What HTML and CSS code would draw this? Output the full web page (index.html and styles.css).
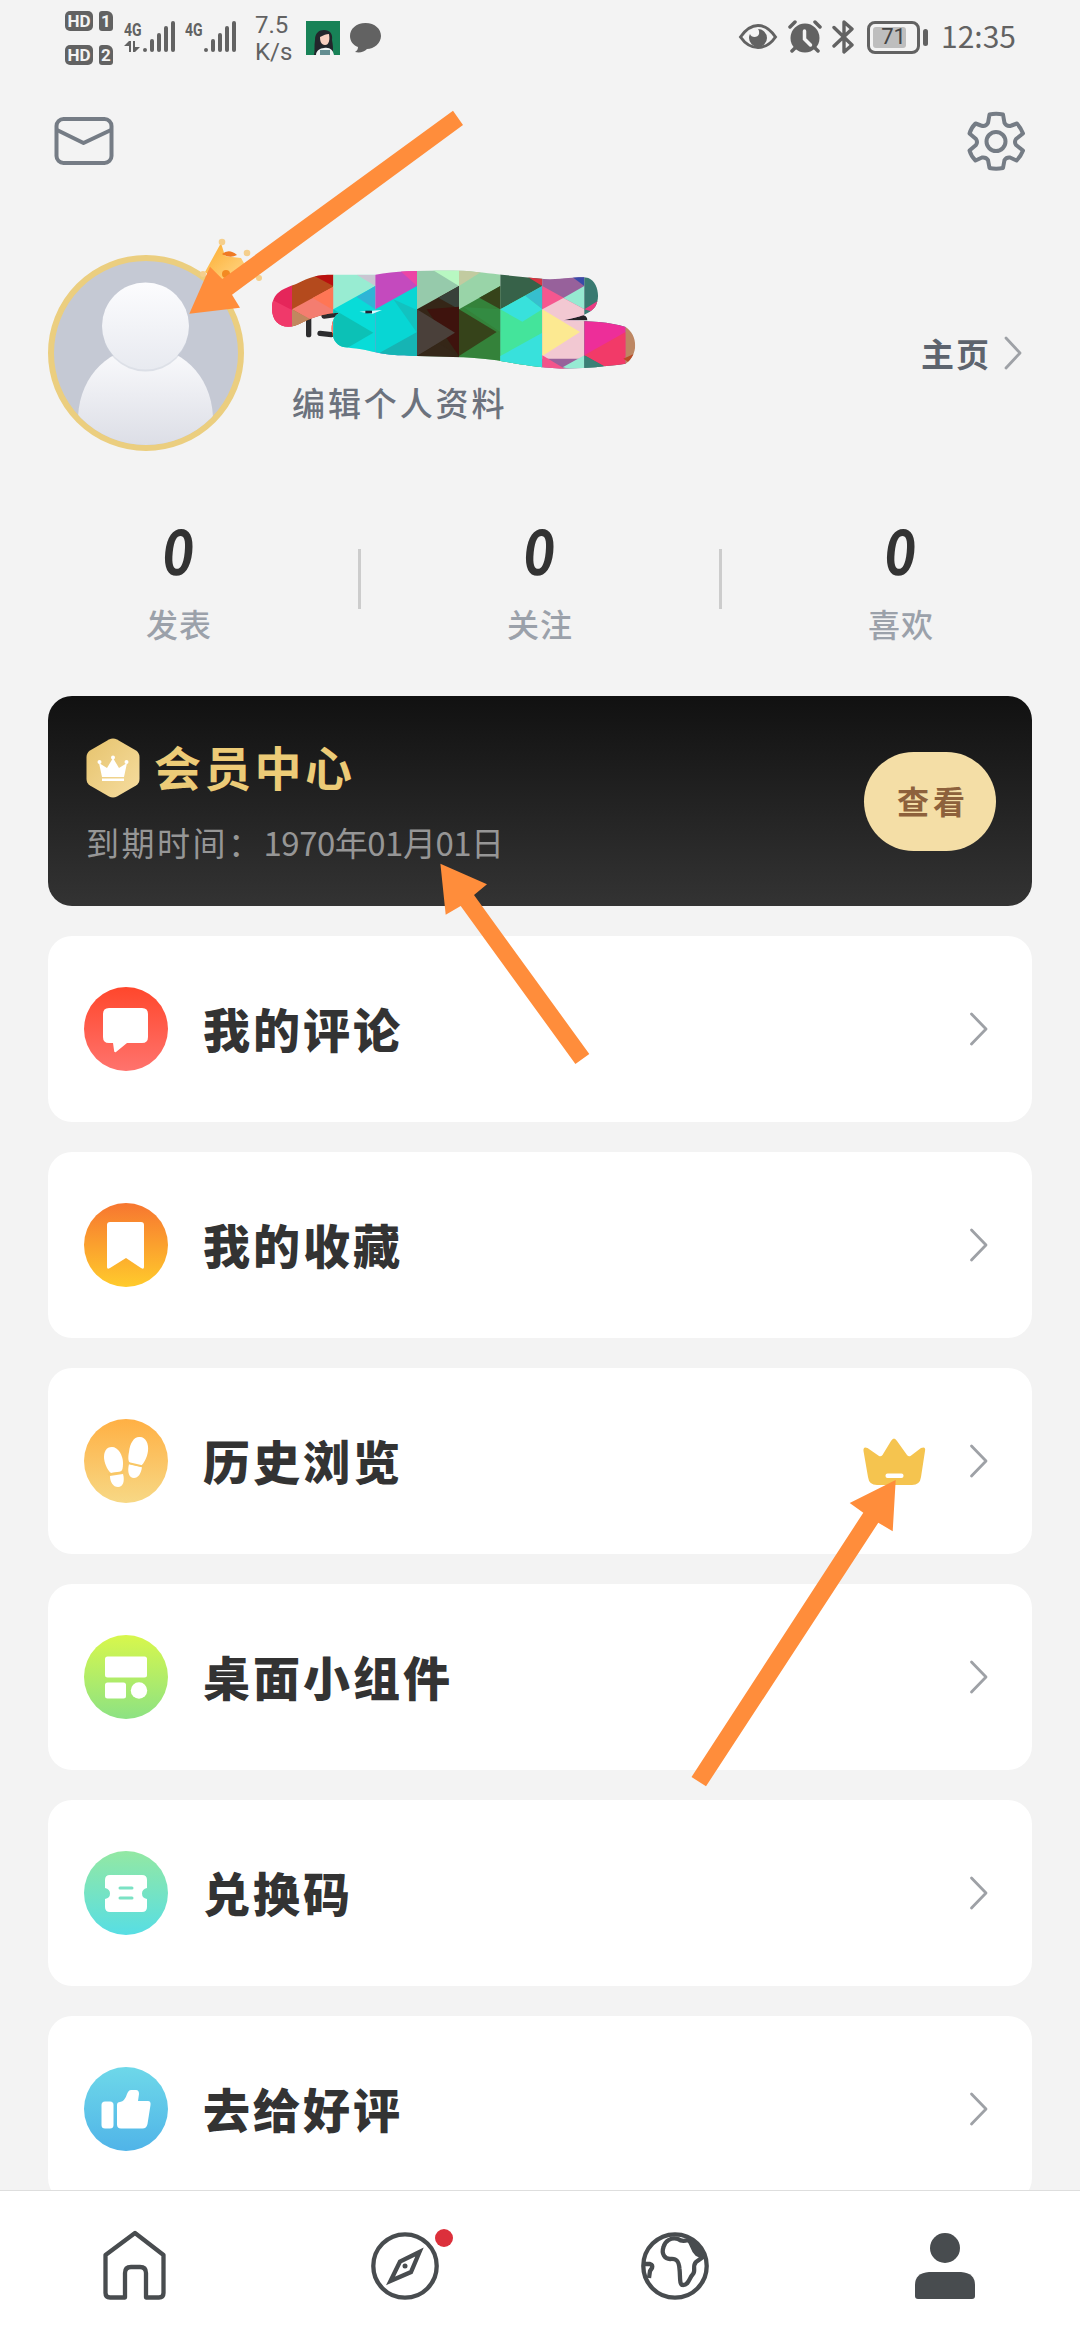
FILE: index.html
```html
<!DOCTYPE html>
<html lang="zh-CN">
<head>
<meta charset="utf-8">
<title>我的</title>
<link rel="stylesheet" href="styles.css">
</head>
<body>
<div class="screen">
  <header class="status">
    <div class="status-left">
      <div class="hd-stack">
        <div class="hd-row"><span class="hd">HD</span><span class="sim">1</span></div>
        <div class="hd-row"><span class="hd">HD</span><span class="sim">2</span></div>
      </div>
      <div class="signal signal-data">
        <span class="net">4G</span>
        <svg width="52" height="34" viewBox="0 0 52 34"><g stroke="#626262" stroke-width="4" stroke-linecap="round"><path d="M21 30v.1M28 21v9M35 15v15M42 8v22M49 3v27"/></g><path d="M0 26l5-5h2v11H5v-6zM9 21h2v6h5l-5 5H9z" fill="#626262"/></svg>
      </div>
      <div class="signal">
        <span class="net">4G</span>
        <svg width="52" height="34" viewBox="0 0 52 34"><g stroke="#626262" stroke-width="4" stroke-linecap="round"><path d="M21 30v.1M28 21v9M35 15v15M42 8v22M49 3v27"/></g></svg>
      </div>
      <div class="speed"><span>7.5</span><span>K/s</span></div>
      <svg class="app-thumb" width="34" height="34" viewBox="0 0 34 34"><path fill="#188257" d="M0 0h34v34H0z"/><path d="M8 34c1-5 0-9 1-15 0-7 4-10 9-10 6 0 9 4 8 10 1 5 1 8 1 12l-4 3z" fill="#23252b"/><path d="M14 16c4-2 6-3 9-3 1 6 0 11-4 11s-5-4-5-8z" fill="#f8cfc0"/><path d="M10 34c0-4 4-7 8-7 6-1 9 2 10 7z" fill="#eef2f2"/><path d="M14 34v-5h10v5z" fill="#638d91"/></svg>
      <svg class="bubble" width="33" height="32" viewBox="0 0 33 32"><path d="M16.500 1C26 1 32 7 32 14S25 27 18 27c-3 3-7 4-12 3 2-1 3-3 3-5C4 23 1 19 1 14 1 7 7 1 16.500 1z" fill="#626262"/></svg>
    </div>
    <div class="status-right">
      <svg width="40" height="28" viewBox="0 0 40 28"><path d="M2.500 14C8 6 13 2.500 20 2.500S32 6 37.500 14C32 22 27 24.500 20 24.500S8 22 2.500 14z" fill="none" stroke="#626262" stroke-width="3"/><path d="M20 6a9 9 0 1 1-9 9c0-2 .5-3 1-4 1 4 8 4 9 0 .3-2 0-4-1-5z" fill="#626262"/></svg>
      <svg width="34" height="34" viewBox="0 0 34 34"><circle cx="17" cy="18" r="14.500" fill="#626262"/><path d="M2 7l5-5M27 2l5 5M7 28l-3 3M27 28l3 3" stroke="#626262" stroke-width="3.500" stroke-linecap="round"/><path d="M16.500 11v8l6 6" fill="none" stroke="#f3f3f3" stroke-width="3.500" stroke-linecap="round"/></svg>
      <svg width="24" height="36" viewBox="0 0 24 36"><path d="M2 8.500l18 17.500-8 7V3l8 7L2 27" fill="none" stroke="#626262" stroke-width="3.400" stroke-linecap="round" stroke-linejoin="round"/></svg>
      <div class="battery"><span class="battery-fill"></span><span class="battery-num">71</span></div>
      <span class="battery-cap"></span>
      <span class="clock">12:35</span>
    </div>
  </header>

  <div class="toolbar">
    <svg width="60" height="50" viewBox="0 0 60 50"><g fill="none" stroke="#757c85" stroke-width="4"><rect x="2.500" y="3" width="55" height="44" rx="7"/><path d="M3 14l26.500 13L57 14" stroke-linejoin="round"/></g></svg>
    <svg width="60" height="60" viewBox="0 0 60 60"><g fill="none" stroke="#757c85" stroke-width="4" stroke-linejoin="round"><path d="M23.500 3.500Q30 2 37 3.500L38.500 12Q41 16 45.500 14.500L51 12.500Q55 17 57 22.500L50 28Q48 31 50 34L57 39.500Q55 45 50.500 49.500L44 46.500Q40.500 46 38.500 49L37 57Q30 58.500 23.500 57L22 49Q20 46 16 46.500L9.500 49.500Q5 45 3.500 39.500L10 34Q12 31 10 28L3.500 22.500Q5 17 9.500 12.500L15 14.500Q19.500 16 22 12Z"/><circle cx="30" cy="30.500" r="9.500"/></g></svg>
  </div>

  <section class="profile">
    <div class="avatar">
      <svg width="184" height="184" viewBox="0 0 184 184">
        <defs>
          <linearGradient id="person" x1="0" y1="0" x2="0" y2="1"><stop offset="0" stop-color="#fcfcfe"/><stop offset="1" stop-color="#e8eaf0"/></linearGradient>
          <linearGradient id="torso" x1="0" y1="0" x2="0" y2="1"><stop offset="0" stop-color="#fbfbfd"/><stop offset="1" stop-color="#dcdee6"/></linearGradient>
        </defs>
        <path d="M24 184V156C26 112 58 86 91.500 86S157 112 159 156V184z" fill="url(#torso)"/>
        <circle cx="91.500" cy="67" r="43.500" fill="#c9cdd8" opacity=".55"/>
        <circle cx="91.500" cy="65" r="43.500" fill="url(#person)"/>
      </svg>
      <svg class="avatar-crown" width="68" height="56" viewBox="0 0 68 56">
        <defs><linearGradient id="gold" x1="0" y1="0" x2="1" y2="1"><stop offset="0" stop-color="#fdab2d"/><stop offset="1" stop-color="#ffe3a0"/></linearGradient></defs>
        <path d="M26 7L10 36Q25 50 44 52L62 41L54 36L46 22L37 21L30 20Z" fill="url(#gold)"/>
        <path d="M27 18Q34 12 42 19Q35 23 27 18Z" fill="#ef7a24"/>
        <g fill="#f5cf8c"><circle cx="27" cy="6" r="3.300"/><circle cx="52" cy="17" r="3.300"/><circle cx="8" cy="38" r="3"/><circle cx="64" cy="42" r="3"/></g>
        <circle cx="31" cy="38" r="4" fill="#f38a22"/>
      </svg>
    </div>
    <div class="who">
      <svg class="mosaic" width="368" height="106" viewBox="60 85 1104 318">
        <defs><clipPath id="blob"><path d="M66 210C66 160 100 150 140 135C180 115 200 108 250 108L376 108C450 95 550 95 640 96C740 105 800 115 900 122C960 118 1000 112 1015 118C1045 130 1052 180 1035 205C1020 225 990 235 940 245C1020 248 1080 250 1127 265C1165 290 1165 350 1127 375C1080 382 1000 390 930 390C850 385 800 375 740 365C650 352 560 355 501 352C450 352 400 348 350 335C320 328 300 328 280 325C235 315 235 235 270 222C230 222 190 235 160 250C110 280 66 260 66 210Z"/></clipPath></defs>
        <path d="M176 240v48M222 232l44-6M210 284l34 4" stroke="#2c2c2e" stroke-width="16" stroke-linecap="round"/>
        <path d="M938 244l54-15q20 0 20 16z" fill="#232326"/>
        <g clip-path="url(#blob)">
          <path fill="#e5265a" d="M60 85h66v318H60z"/><path fill="#f0396a" d="M60 180l66 34v80H60z"/>
          <path fill="#b44a1d" d="M126 85h124v318H126z"/><path fill="#b9100f" d="M186 108h64v34z"/><path fill="#f47d70" d="M126 212l124-68v140z"/><path fill="#ff7655" d="M188 178l62-34v70z"/><path fill="#c1875f" d="M126 212l75 40-75 51z"/>
          <path fill="#98ecd2" d="M250 85h126v318H250z"/><path fill="#c9c6d2" d="M320 108h56v34z"/><path fill="#08dcd8" d="M250 212l126-70v220H250z"/><path fill="#2fb4d6" d="M320 175l56-33v70z"/><path fill="#0cc1b6" d="M250 212l120 70-120 70z"/>
          <path fill="#c44abe" d="M376 85h125v318H376z"/><path fill="#ec45a5" d="M438 85h63v57z"/><path fill="#08d6d4" d="M376 212l125-70v250H376z"/><path fill="#12c2c0" d="M430 182l71 32v68z"/><path fill="#16b4b4" d="M376 350l125-70v80H376z"/>
          <path fill="#96caab" d="M501 85h126v318H501z"/><path fill="#b8f8c2" d="M545 92h82v50z"/><path fill="#352617" d="M501 212l126-70v220H501z"/><path fill="#38413a" d="M565 177l62-35v70z"/><path fill="#3e130d" d="M530 212l97-8v148z"/><path fill="#4a403a" d="M501 212l114 70-114 70z"/><path fill="#352719" d="M501 352l66-38 60 38z"/>
          <path fill="#99d4a8" d="M627 85h124v318H627z"/><path fill="#c2cba0" d="M627 90h82l-82 52z"/><path fill="#34823a" d="M627 212l124-70v250H627z"/><path fill="#36431a" d="M688 177l63-35v70z"/><path fill="#36431a" d="M627 212l113 68-113 72z"/><path fill="#349147" d="M640 205l111 7v68z" opacity=".6"/>
          <path fill="#376249" d="M751 85h126v318H751z"/><path fill="#d93341" d="M822 108h55v34z"/><path fill="#44e49b" d="M751 212l126-70v250H751z"/><path fill="#36bfce" d="M825 171l52-29v70z"/><path fill="#38e1dc" d="M751 212l74-41 52 41-60 37zM751 352l126-70v120H751z"/>
          <path fill="#97619b" d="M877 85h126v318H877z"/><path fill="#384ba9" d="M960 110h43v32z"/><path fill="#f5578f" d="M877 142l126 70H877z"/><path fill="#96e9d1" d="M940 178l63-36v70z"/><path fill="#f2c8d2" d="M877 212l63-34 63 34v148H877z"/><path fill="#fce991" d="M877 212l113 68-113 72z"/><path fill="#f3548b" d="M877 350l70 42h-70z"/><path fill="#96ead3" d="M938 386l65-36v50z"/>
          <path fill="#397a71" d="M1003 85h124v318h-124z"/><path fill="#ee3a83" d="M1003 212l55-34v50z"/><path fill="#ed2e99" d="M1003 236h124v116h-124z"/><path fill="#f23a68" d="M1003 350l124-70v110h-50z"/><path fill="#3a8076" d="M1003 350l70 40h-70z"/>
          <path fill="#bd8763" d="M1127 240h40v150h-40z"/><path fill="#b94c27" d="M1120 360l45-20v50z"/>
        </g>
        <path d="M328 219l68-5-28 11z" fill="#dffaff"/><path d="M346 216h20v8h-20z" fill="#223"/>
      </svg>
      <div class="edit">编辑个人资料</div>
    </div>
    <div class="home-link"><span>主页</span><svg width="20" height="36" viewBox="0 0 20 36"><path d="M3 3l14 15L3 33" class="chev"/></svg></div>
  </section>

  <section class="stats">
    <div class="stat"><b>0</b><span>发表</span></div>
    <div class="stat-line"></div>
    <div class="stat"><b>0</b><span>关注</span></div>
    <div class="stat-line"></div>
    <div class="stat"><b>0</b><span>喜欢</span></div>
  </section>

  <main class="cards">
    <section class="vip">
      <div class="vip-text">
        <div class="vip-title">
          <svg width="56" height="62" viewBox="0 0 56 62"><defs><linearGradient id="hex" x1="0" y1="0" x2="1" y2="1"><stop offset="0" stop-color="#e6c36d"/><stop offset="1" stop-color="#f6dda0"/></linearGradient></defs><path d="M24 2.500Q28 .5 32 2.500L51 13.500Q54.500 16 54.500 20V42Q54.500 46 51 48.500L32 59.500Q28 61.500 24 59.500L5 48.500Q1.500 46 1.500 42V20Q1.500 16 5 13.500Z" fill="url(#hex)"/><g fill="#fff"><path d="M14 26l8 5 6-10 6 10 8-5-3 14H17z"/><path d="M17 41.500h22v2.500H17z"/><circle cx="14.500" cy="25" r="2"/><circle cx="28" cy="20.500" r="2"/><circle cx="41.500" cy="25" r="2"/></g></svg>
          <h2>会员中心</h2>
        </div>
        <div class="vip-date"><span class="vip-label">到期时间<span class="colon">：</span></span><span>1970年01月01日</span></div>
      </div>
      <div class="vip-btn">查看</div>
    </section>

    <div class="item">
      <div class="ico ico-comment"><svg viewBox="0 0 84 84"><path d="M25 21h33q6 0 6 6v23q0 6-6 6H43L32 65q-2 1-2-2l-1-7h-4q-6 0-6-6V27q0-6 6-6z" fill="#fff"/></svg></div>
      <span class="label">我的评论</span>
      <svg class="go" width="20" height="36" viewBox="0 0 20 36"><path d="M2.500 3l14.500 15L2.500 33" class="chev"/></svg>
    </div>
    <div class="item">
      <div class="ico ico-mark"><svg viewBox="0 0 84 84"><path d="M26 19h31q3 0 3 3v42q0 3-3 1L42 55 26 65q-3 2-3-1V22q0-3 3-3z" fill="#fff"/></svg></div>
      <span class="label">我的收藏</span>
      <svg class="go" width="20" height="36" viewBox="0 0 20 36"><path d="M2.500 3l14.500 15L2.500 33" class="chev"/></svg>
    </div>
    <div class="item">
      <div class="ico ico-steps"><svg viewBox="0 0 84 84"><g fill="#fff"><path d="M28 28c6 0 11 8 11 16 0 6-1 8-3 9l-9 1c-4-3-7-11-7-16s2-10 8-10z"/><path d="M26 57l13-2c2 7 0 13-5 13s-8-5-8-11z"/><path d="M55 18c6-1 10 6 9 14-1 7-4 12-7 15l-11-3c-2-2-2-6-1-11 1-9 5-15 10-15z"/><path d="M45 45l13 3c-1 7-4 11-8 11-5 0-7-6-5-14z"/></g><path d="M24 55.500l16-2.500M44 44l15 3.500" stroke="#f9c765" stroke-width="2"/></svg></div>
      <span class="label">历史浏览</span>
      <svg class="crown" width="64" height="50" viewBox="0 0 64 50"><path d="M5.500 12L17 20Q19 21 20.500 19L29 5Q32 0 35 5L45 19Q46.500 21 48.500 20L59 12Q64 10 63 15L59 41Q58 49 50 49H15Q7 49 6 41L1.500 15Q1 10 5.500 12Z" fill="#f5c44f"/><rect x="23.500" y="37.500" width="18" height="4.500" rx="2" fill="#fff"/></svg>
      <svg class="go" width="20" height="36" viewBox="0 0 20 36"><path d="M2.500 3l14.500 15L2.500 33" class="chev"/></svg>
    </div>
    <div class="item">
      <div class="ico ico-widget"><svg viewBox="0 0 84 84"><g fill="#fff"><rect x="21" y="21.500" width="42" height="21" rx="2.500"/><rect x="21" y="47.500" width="21" height="16" rx="2.500"/><circle cx="55" cy="55.500" r="8.200"/></g></svg></div>
      <span class="label">桌面小组件</span>
      <svg class="go" width="20" height="36" viewBox="0 0 20 36"><path d="M2.500 3l14.500 15L2.500 33" class="chev"/></svg>
    </div>
    <div class="item">
      <div class="ico ico-code"><svg viewBox="0 0 84 84"><path d="M26 24h32q5 0 5 5v8q-5 1-5 5.500t5 5.500v8q0 5-5 5H26q-5 0-5-5v-8q5-1 5-5.500T21 37v-8q0-5 5-5z" fill="#fff"/><path d="M36 37h12M36 47h12" stroke="#7be2c4" stroke-width="3" stroke-linecap="round"/></svg></div>
      <span class="label">兑换码</span>
      <svg class="go" width="20" height="36" viewBox="0 0 20 36"><path d="M2.500 3l14.500 15L2.500 33" class="chev"/></svg>
    </div>
    <div class="item">
      <div class="ico ico-like"><svg viewBox="0 0 84 84"><g fill="#fff"><rect x="17.500" y="34.500" width="12" height="27" rx="3.500"/><path d="M33 38q0-3 3-3 5-1 7-8l1-2q1-2 3-2h5q3 0 3 4l-1 7h10q3 0 2.500 4l-3 19q-1 4.500-5 4.500H37q-4 0-4-4z"/></g></svg></div>
      <span class="label">去给好评</span>
      <svg class="go" width="20" height="36" viewBox="0 0 20 36"><path d="M2.500 3l14.500 15L2.500 33" class="chev"/></svg>
    </div>
  </main>

  <nav class="tabs">
    <div class="tab"><svg width="72" height="76" viewBox="0 0 72 76"><path d="M36 5L64.500 27V65Q64.500 69.500 60 69.500H47V45Q47 39 41 39H32Q26 39 26 45V69.500H11Q6.500 69.500 6.500 65V27Z" fill="none" stroke="#484c4f" stroke-width="4.300" stroke-linejoin="round"/></svg></div>
    <div class="tab"><svg width="72" height="76" viewBox="0 0 72 76"><g fill="none" stroke="#484c4f" stroke-width="4.300"><circle cx="36" cy="38" r="31.700"/><path d="M50.500 24L31 33.500 21.500 53 42 44z"/></g><circle cx="36" cy="38" r="2.500" fill="#484c4f"/></svg><i class="dot"></i></div>
    <div class="tab"><svg width="72" height="76" viewBox="0 0 72 76"><g fill="none" stroke="#484c4f" stroke-width="4.300" stroke-linejoin="round"><circle cx="36" cy="38" r="31.700"/><path d="M39 11C32 9 26 13 24.500 19C22 26 26 31 31 31C38 30 40 34 40.500 41C41.500 49 40 57 44 57C50 57 50 50 54 46C57 43 53 38 57 34L64 29L58 26C52 21 54 15 49 12Q43 14 39 11ZM53 13C57 18 59 24 64 27M5 36L11 36Q14 37 13 40L11 43L10 50"/></g></svg></div>
    <div class="tab"><svg width="72" height="76" viewBox="0 0 72 76"><g fill="#484c4f"><circle cx="36" cy="20" r="15"/><path d="M20 44H52Q66 45 66 57V68Q66 71 63 71H9Q6 71 6 68V57Q6 45 20 44Z"/></g></svg></div>
  </nav>

  <svg class="arrows" width="1080" height="2340" viewBox="0 0 1080 2340"><g fill="#ff8d3b">
    <path d="M189.300 313.700L210 266.700L222.300 279L453 110.700L463 125L232 294.700L240 307.700Z"/>
    <path d="M440.400 863.700L487 884.300L474 895L589.300 1054L575.400 1064L460.700 906L445.700 914.700Z"/>
    <path d="M895.700 1480L849.700 1503L863.300 1512.700L691.500 1777L706 1786.300L878.300 1522.700L892.700 1531.300Z"/>
  </g></svg>
</div>
</body>
</html>
```
FILE: styles.css
```css
* { box-sizing: border-box; margin: 0; padding: 0; }
body { background: #f3f3f3; font-family: "Noto Sans CJK SC", sans-serif; color: #333; }
svg { display: block; flex: none; }
.screen { position: relative; width: 1080px; height: 2340px; overflow: hidden; display: flex; flex-direction: column; background: #f3f3f3; }

.status { height: 75px; flex: none; display: flex; justify-content: space-between; padding: 0 65px; color: #626262; }
.status-left { display: flex; align-items: flex-start; }
.hd-stack { display: flex; flex-direction: column; gap: 14px; padding-top: 11px; }
.hd-row { display: flex; gap: 6px; }
.hd, .sim { height: 20px; border-radius: 5px; background: #626262; color: #f3f3f3; font: 700 17px/20px Roboto, sans-serif; text-align: center; }
.hd { width: 28px; }
.sim { width: 14px; border-radius: 3px 6px 3px 3px; }
.signal { position: relative; width: 52px; margin: 20px 0 0 9px; }
.signal-data { margin-left: 11px; }
.net { position: absolute; left: 0; top: 1px; font: 700 18px/17px Roboto, sans-serif; transform: scaleX(.78); transform-origin: left; }
.speed { display: flex; flex-direction: column; width: 44px; margin: 12px 0 0 18px; font: 400 24px/27px Roboto, sans-serif; }
.app-thumb { margin: 21px 0 0 7px; }
.bubble { margin: 22px 0 0 9px; }
.status-right { display: flex; align-items: center; height: 74px; }
.status-right > svg + svg { margin-left: 10px; }
.battery { position: relative; width: 53px; height: 33px; margin-left: 11px; border: 3px solid #626262; border-radius: 8px; }
.battery-fill { display: block; width: 33px; height: 21px; margin: 3px; border-radius: 3px; background: #bebebe; }
.battery-num { position: absolute; left: 0; top: 0; width: 47px; text-align: center; font: 400 22px/26px Roboto, sans-serif; color: #444; }
.battery-cap { width: 5px; height: 17px; margin-left: 3px; border-radius: 3px; background: #626262; }
.clock { margin-left: 13px; width: 74px; font: 400 30px/40px "Noto Sans CJK SC", sans-serif; white-space: nowrap; transform: translateY(-2px); }

.toolbar { height: 132px; flex: none; display: flex; justify-content: space-between; align-items: center; padding: 0 54px; }
.profile { height: 291px; flex: none; display: flex; align-items: center; padding: 0 57px 0 48px; }
.avatar { position: relative; width: 196px; height: 196px; border: 6px solid #ebce7f; border-radius: 50%; background: #c5c9d4; }
.avatar > svg:first-child { border-radius: 50%; }
.avatar-crown { position: absolute; left: 141px; top: -25px; }
.who { width: 420px; margin-left: 26px; padding-bottom: 13px; }
.edit { margin: 6px 0 0 22px; font-size: 33px; line-height: 46px; font-weight: 500; letter-spacing: 2.900px; color: #6c727d; }
.home-link { flex: 1; display: flex; justify-content: flex-end; align-items: center; gap: 12px; font-size: 33px; line-height: 46px; font-weight: 700; letter-spacing: 2px; color: #5d646e; }
.chev { fill: none; stroke: #9ea1a6; stroke-width: 2.800; stroke-linecap: round; stroke-linejoin: round; }

.stats { height: 198px; flex: none; display: flex; padding-top: 12px; }
.stat { flex: 1; display: flex; flex-direction: column; align-items: center; }
.stat b { font-size: 61px; line-height: 78px; transform: skewX(-6deg) scaleX(.88); }
.stat span { margin-top: 12px; font-size: 32px; line-height: 46px; font-weight: 500; letter-spacing: 1px; color: #9ba1aa; }
.stat-line { width: 3px; height: 60px; margin-top: 39px; background: #ccc; }

.cards { flex: 1; min-height: 0; overflow: hidden; display: flex; flex-direction: column; gap: 30px; padding: 0 48px; }
.vip { height: 210px; flex: none; display: flex; justify-content: space-between; align-items: center; padding: 0 36px; border-radius: 24px; background: linear-gradient(#111, #333); }
.vip-title { display: flex; align-items: center; gap: 13px; height: 62px; padding-left: 1px; }
.vip-title h2 { font-size: 47px; line-height: 58px; padding-bottom: 4px; letter-spacing: 3.300px; color: #eccb77; }
.vip-date { display: flex; margin: 20px 0 0 2px; font-size: 33px; line-height: 46px; color: #969696; white-space: nowrap; letter-spacing: -.5px; }
.vip-label { letter-spacing: 2.500px; }
.colon { font-family: "Noto Sans CJK TC", sans-serif; }
.vip-btn { width: 132px; height: 99px; border-radius: 50px; background: #f4dea6; color: #8d613c; font-size: 32px; line-height: 97px; font-weight: 700; text-align: center; letter-spacing: 4px; padding-left: 6px; }

.item { height: 186px; flex: none; display: flex; align-items: center; padding: 0 43px 0 36px; border-radius: 24px; background: #fff; }
.ico { width: 84px; height: 84px; border-radius: 50%; }
.ico svg { width: 84px; height: 84px; }
.ico-comment { background: linear-gradient(#ff472c, #ff736d); }
.ico-mark { background: linear-gradient(#f77630, #ffcb2c); }
.ico-steps { background: linear-gradient(#ffb044, #f7d885); }
.ico-widget { background: linear-gradient(#d8f74c, #8ce283); }
.ico-code { background: linear-gradient(#93e8a3, #57dee4); }
.ico-like { background: linear-gradient(#6ed8e9, #50b4e8); }
.label { margin-left: 35px; padding-bottom: 3px; font-size: 47px; line-height: 64px; font-weight: 900; letter-spacing: 3px; }
.go { margin-left: auto; }
.crown { margin-left: auto; }
.crown + .go { margin-left: 43px; }

.tabs { height: 150px; flex: none; display: flex; border-top: 1px solid #dedede; background: #fff; }
.tab { position: relative; flex: 1; display: flex; justify-content: center; align-items: center; }
.dot { position: absolute; left: 165px; top: 38px; width: 18px; height: 18px; border-radius: 50%; background: #dc303b; }
.arrows { position: absolute; left: 0; top: 0; pointer-events: none; }
```
